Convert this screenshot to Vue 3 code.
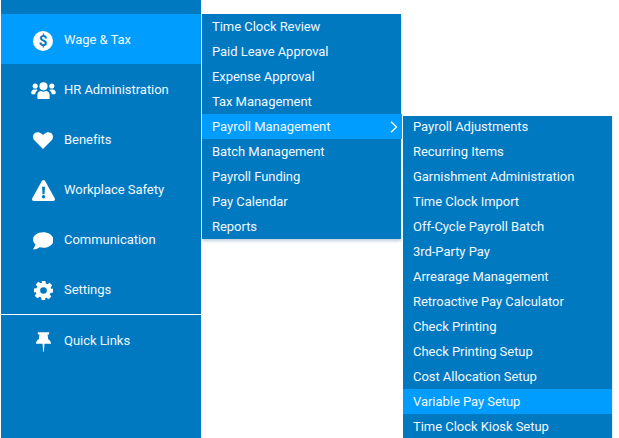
<script setup>
const side = [
  { label: 'Wage & Tax', icon: 'dollar', active: true },
  { label: 'HR Administration', icon: 'users' },
  { label: 'Benefits', icon: 'heart' },
  { label: 'Workplace Safety', icon: 'warn' },
  { label: 'Communication', icon: 'chat' },
  { label: 'Settings', icon: 'gear' },
]
const first = ['Time Clock Review','Paid Leave Approval','Expense Approval','Tax Management','Payroll Management','Batch Management','Payroll Funding','Pay Calendar','Reports']
const second = ['Payroll Adjustments','Recurring Items','Garnishment Administration','Time Clock Import','Off-Cycle Payroll Batch','3rd-Party Pay','Arrearage Management','Retroactive Pay Calculator','Check Printing','Check Printing Setup','Cost Allocation Setup','Variable Pay Setup','Time Clock Kiosk Setup']
</script>

<template>
  <div class="page">
    <nav class="side">
      <div class="spacer"></div>
      <a v-for="s in side" :key="s.label" class="side-row" :class="{ on: s.active }">
        <span class="ico">
          <svg v-if="s.icon==='dollar'" width="20" height="20" viewBox="0 0 20 20">
            <circle cx="10" cy="10" r="10" fill="#fff"/>
            <text x="10" y="15" text-anchor="middle" class="dollar">$</text>
          </svg>
          <svg v-else-if="s.icon==='users'" width="25" height="17" viewBox="0 0 26 18" fill="#fff">
            <circle cx="13" cy="4.6" r="4.300"/>
            <circle cx="4.200" cy="4.200" r="2.700"/>
            <circle cx="21.800" cy="4.200" r="2.700"/>
            <path d="M6.500 17v-3.200C6.500 11 8.600 9.600 10.500 9.600c.8.4 1.600.6 2.500.6s1.700-.2 2.500-.6c1.900 0 4 1.400 4 4.200V17c0 .6-.5 1-1 1H7.500c-.5 0-1-.4-1-1z"/>
            <path d="M0 11.500C0 9.500 1.300 8 3 8h2.500c.5 0 1 .2 1.400.5C5.300 9.700 4.300 11.300 4.200 13H1c-.6 0-1-.5-1-1.500z"/>
            <path d="M26 11.500C26 9.500 24.700 8 23 8h-2.500c-.5 0-1 .2-1.400.5 1.600 1.200 2.600 2.800 2.700 4.500H25c.6 0 1-.5 1-1.500z"/>
          </svg>
          <svg v-else-if="s.icon==='heart'" width="20" height="17.500" viewBox="0 0 22 19" fill="#fff">
            <path d="M11 18.500 2 9.600C-.6 7-.6 3.200 1.800 1.200 4-.6 7.300-.3 9.500 1.800L11 3.300l1.500-1.500C14.700-.3 18-.6 20.200 1.200c2.400 2 2.400 5.800-.2 8.400z"/>
          </svg>
          <svg v-else-if="s.icon==='warn'" width="23" height="21" viewBox="0 0 24 20" preserveAspectRatio="none">
            <path fill="#fff" d="M10.300 1 .3 17.300C-.5 18.600.4 20 1.800 20h20.400c1.400 0 2.300-1.400 1.500-2.700L13.700 1c-.8-1.300-2.600-1.300-3.400 0z"/>
            <path fill="#0079c1" d="M10.500 6.500h3l-.5 7h-2z"/>
            <circle cx="12" cy="16" r="1.700" fill="#0079c1"/>
          </svg>
          <svg v-else-if="s.icon==='chat'" width="20.500" height="18" viewBox="0 0 21 18" fill="#fff">
            <path d="M10.500 0C4.700 0 0 3.400 0 7.500c0 1.800.9 3.500 2.400 4.800-.2 1.900-1.300 3.700-2.100 4.700-.2.300 0 .7.300.7 2.600 0 4.800-1 6.200-2.200 1.200.3 2.400.5 3.700.5 5.800 0 10.500-3.400 10.500-8S16.300 0 10.500 0z"/>
          </svg>
          <svg v-else-if="s.icon==='gear'" width="19" height="19" viewBox="0 0 20 20">
            <path fill="#fff" d="M8 0h4l.5 2.700 1.600.7 2.300-1.600 2.800 2.800-1.600 2.300.7 1.600L20 8v4l-2.700.5-.7 1.600 1.600 2.300-2.800 2.800-2.300-1.600-1.600.7L12 20H8l-.5-2.700-1.600-.7-2.300 1.600L.8 15.400l1.600-2.300-.7-1.600L0 12V8l2.700-.5.7-1.600-1.600-2.300L4.600.8l2.300 1.600 1.600-.7z"/>
            <circle cx="10" cy="10" r="3.500" fill="#0079c1"/>
          </svg>
        </span>
        <span>{{ s.label }}</span>
      </a>
      <div class="rule"></div>
      <a class="side-row quick">
        <span class="ico">
          <svg width="15" height="20" viewBox="0 0 16 21" fill="#fff">
            <path d="M2 0h12v2.400h-1.700l.7 5.200C14.800 8.600 16 10.300 16 12.300H9l-.6 8.700h-.8L7 12.300H0c0-2 1.200-3.700 3-4.700l.7-5.200H2z"/>
          </svg>
        </span>
        <span>Quick Links</span>
      </a>
    </nav>

    <ul class="menu m1">
      <li v-for="m in first" :key="m" :class="{ on: m==='Payroll Management' }">
        {{ m }}
        <svg v-if="m==='Payroll Management'" class="chev" width="8" height="12" viewBox="0 0 8 12" fill="none" stroke="#fff" stroke-width="1.300"><path d="M1 .8 6.500 6 1 11.200"/></svg>
      </li>
    </ul>
    <ul class="menu m2">
      <li v-for="m in second" :key="m" :class="{ on: m==='Variable Pay Setup' }">{{ m }}</li>
    </ul>
  </div>
</template>

<style scoped>
.page {
  position: relative;
  width: 619px;
  height: 438px;
  overflow: hidden;
  background: #fff;
  font-family: Roboto, "Liberation Sans", sans-serif;
  font-size: 13px;
  letter-spacing: -0.04px;
  color: #f0f8ff;
}
.side {
  width: 200px;
  height: 438px;
  margin-left: 1px;
  background: #0079c1;
  display: flex;
  flex-direction: column;
}
.spacer { height: 14px; }
.side-row {
  height: 50px;
  display: flex;
  align-items: center;
  flex: none;
}
.side-row.on { background: #009dff; }
.ico {
  width: 63px;
  padding-left: 29px;
  padding-right: 8px;
  padding-top: 3px;
  box-sizing: border-box;
  flex: none;
  display: flex;
  justify-content: center;
}
.ico svg { display: block; flex: none; }
.dollar { font: 700 15px Roboto, sans-serif; fill: #0079c1; }
.rule { height: 1px; background: #fff; flex: none; }
.menu {
  position: absolute;
  margin: 0;
  padding: 0;
  list-style: none;
  background: #0079c1;
  box-shadow: 0 2px 3px rgba(0, 60, 110, .25);
}
.menu li {
  height: 25px;
  line-height: 25px;
  padding-left: 10px;
  position: relative;
}
.menu li.on { background: #009dff; }
.m1 { left: 202px; top: 14px; width: 199px; }
.m1 li.on { margin-right: -1px; }
.m2 { left: 403px; top: 114px; width: 209px; clip-path: inset(2px -5px 0 0); }
.chev { position: absolute; right: 4px; top: 7px; }
</style>
